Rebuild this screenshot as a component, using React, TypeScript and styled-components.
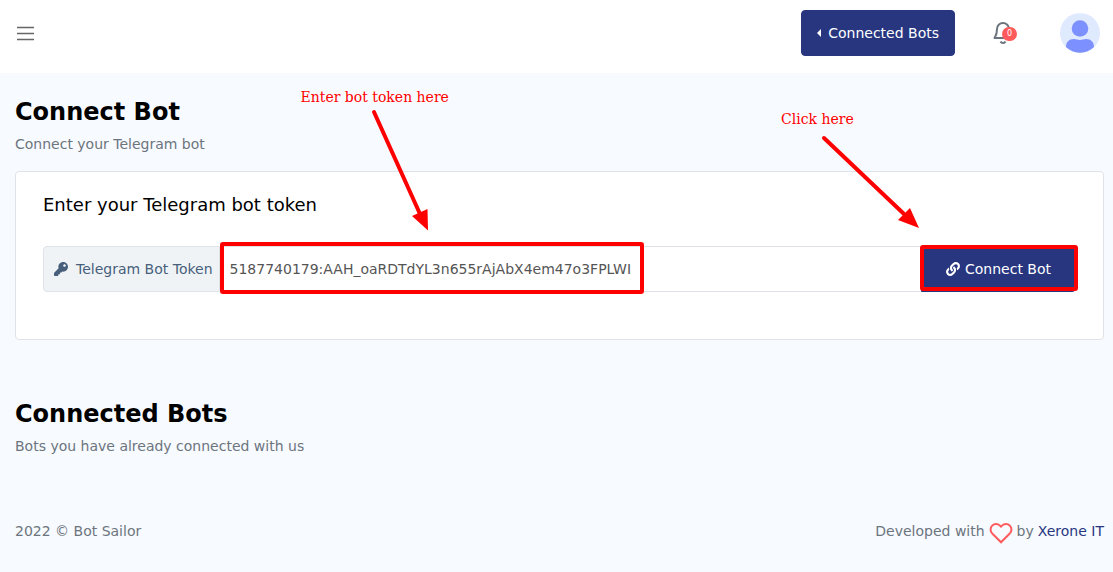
import React from "react";
import styled, { createGlobalStyle } from "styled-components";
import { FaKey, FaLink } from "react-icons/fa";
import { FiHeart } from "react-icons/fi";

const GlobalStyle = createGlobalStyle`
  * { box-sizing: border-box; }
  body {
    margin: 0;
    background: #f7faff;
    color: #6c757d;
    font-family: "DejaVu Sans", sans-serif;
    font-size: 14px;
    line-height: 20px;
  }
  button, input { font: inherit; }
`;

const TopBar = styled.header`
  display: flex;
  align-items: center;
  justify-content: space-between;
  padding: 10px 13px 17px 17px;
  background: #fff;
`;

const IconButton = styled.button`
  position: relative;
  display: flex;
  padding: 0;
  border: 0;
  background: none;
  color: #6c757d;
  cursor: pointer;
`;

const Actions = styled.div`
  display: flex;
  align-items: center;
`;

const PrimaryButton = styled.button<{ $joined?: boolean }>`
  display: flex;
  align-items: center;
  justify-content: center;
  gap: ${(p) => (p.$joined ? 5 : 7)}px;
  height: 46px;
  padding: 0 ${(p) => (p.$joined ? 24 : 15)}px;
  border: 1px solid #27367f;
  border-radius: ${(p) => (p.$joined ? "0 4px 4px 0" : "4px")};
  background: #27367f;
  color: #fff;
  white-space: nowrap;
  cursor: pointer;
`;

const BellButton = styled(IconButton)`
  margin: 0 45px 0 36px;
`;

const Badge = styled.span`
  position: absolute;
  top: 6px;
  left: 11px;
  width: 15px;
  border-radius: 7px;
  background: #ff5b5c;
  color: #fff;
  font-size: 8px;
  line-height: 14px;
  text-align: center;
`;

const Content = styled.main`
  padding: 24px 9px 0 15px;
`;

const Title = styled.h1`
  margin: 0;
  color: #000;
  font-size: 24px;
  line-height: 30px;
`;

const Subtitle = styled.p`
  margin: 7px 0 0;
`;

const Card = styled.section`
  margin: 17px 0 59px;
  padding: 21px 27px 47px;
  border: 1px solid #dfe3e7;
  border-radius: 4px;
  background: #fff;
`;

const CardTitle = styled.h2`
  margin: 0 0 29px;
  color: #000;
  font-size: 18px;
  font-weight: 400;
  line-height: 24px;
`;

const InputGroup = styled.form`
  display: flex;
  height: 46px;
`;

const Addon = styled.label`
  display: flex;
  align-items: center;
  gap: 8px;
  padding: 0 6px 0 10px;
  border: 1px solid #dfe3e7;
  border-radius: 4px 0 0 4px;
  background: #f0f3f6;
  color: #475f7b;
  white-space: nowrap;
`;

const Field = styled.div`
  position: relative;
  display: flex;
  flex: 1;
  min-width: 0;
`;

const TokenInput = styled.input`
  width: 100%;
  padding: 0 10px;
  border: solid #dfe3e7;
  border-width: 1px 0;
  outline: 0;
  background: #fff;
  color: #555;
`;

const Submit = styled.div`
  position: relative;
`;

const Highlight = styled.span<{ $target: "token" | "submit" }>`
  position: absolute;
  top: ${(p) => (p.$target === "token" ? -4 : -1)}px;
  left: ${(p) => (p.$target === "token" ? 0 : -1)}px;
  width: ${(p) => (p.$target === "token" ? "424px" : "calc(100% + 3px)")};
  height: ${(p) => (p.$target === "token" ? 52 : 46)}px;
  border: 4px solid #f00;
  border-radius: 3px;
  pointer-events: none;
`;

const Callout = styled.span<{ $target: "token" | "submit" }>`
  position: absolute;
  bottom: ${(p) => (p.$target === "token" ? 61 : 63)}px;
  left: ${(p) => (p.$target === "token" ? 81 : -140)}px;
  display: flex;
  flex-direction: column;
  gap: ${(p) => (p.$target === "token" ? 1 : 6)}px;
  color: #f00;
  font-family: "DejaVu Serif", serif;
  white-space: nowrap;
  pointer-events: none;

  svg {
    margin-left: ${(p) => (p.$target === "token" ? 70 : 40)}px;
  }
`;

const Footer = styled.footer`
  display: flex;
  align-items: center;
  justify-content: space-between;
  padding: 61px 9px 26px 15px;
`;

const Credit = styled.span`
  display: flex;
  align-items: center;
  gap: 4px;
`;

const Heart = styled(FiHeart)`
  box-sizing: content-box;
  padding-top: 4px;
  color: #ff5b5c;
  stroke-linejoin: miter;
`;

const FooterLink = styled.a`
  color: #27367f;
  text-decoration: none;
`;

export default function App() {
  return (
    <>
      <GlobalStyle />
      <TopBar>
        <IconButton aria-label="Toggle menu">
          <svg width="18" height="15" viewBox="0 0 18 15" stroke="#666" strokeWidth="1.4">
            <path d="M0 1.500h17M0 7.500h17M0 13.500h17" />
          </svg>
        </IconButton>
        <Actions>
          <PrimaryButton>
            <svg width="4" height="8" viewBox="0 0 4 8" fill="currentColor">
              <path d="M4 0v8L0 4z" />
            </svg>
            Connected Bots
          </PrimaryButton>
          <BellButton aria-label="Notifications">
            <svg width="24" height="24" viewBox="0 0 24 24" fill="none" stroke="currentColor" strokeWidth="2">
              <path d="M18 8a6 6 0 0 0-12 0c0 5.500-1.500 7-2.500 9h17c-1-2-2.500-3.500-2.500-9z" strokeLinejoin="round" />
              <path d="M14.500 20.500c-1 2-4 2-5 0" />
            </svg>
            <Badge>0</Badge>
          </BellButton>
          <IconButton aria-label="Account">
            <svg width="40" height="40" viewBox="0 0 40 40">
              <circle cx="20" cy="20" r="20" fill="#e0eaff" />
              <circle cx="20" cy="15.500" r="8.300" fill="#7c90ff" />
              <path d="M6 34C6 29 9 26 14 26c2 0 4 1 6 1s4-1 6-1c5 0 8 3 8 8a20 20 0 0 1-28 0z" fill="#7c90ff" />
            </svg>
          </IconButton>
        </Actions>
      </TopBar>
      <Content>
        <Title>Connect Bot</Title>
        <Subtitle>Connect your Telegram bot</Subtitle>
        <Card>
          <CardTitle>Enter your Telegram bot token</CardTitle>
          <InputGroup onSubmit={(e) => e.preventDefault()}>
            <Addon htmlFor="token">
              <FaKey size={14} />
              Telegram Bot Token
            </Addon>
            <Field>
              <TokenInput
                id="token"
                type="text"
                spellCheck={false}
                defaultValue="5187740179:AAH_oaRDTdYL3n655rAjAbX4em47o3FPLWI"
              />
              <Highlight $target="token" />
              <Callout $target="token">
                Enter bot token here
                <svg width="60" height="123" viewBox="0 0 60 123" fill="#f00">
                  <path d="M3 4L49 106" stroke="#f00" strokeWidth="4" strokeLinecap="round" />
                  <path d="M41 108L56.500 101 57 122.500z" />
                </svg>
              </Callout>
            </Field>
            <Submit>
              <PrimaryButton $joined type="submit">
                <FaLink size={14} />
                Connect Bot
              </PrimaryButton>
              <Highlight $target="submit" />
              <Callout $target="submit">
                Click here
                <svg width="100" height="94" viewBox="0 0 100 94" fill="#f00">
                  <path d="M3 3L83 79" stroke="#f00" strokeWidth="4" strokeLinecap="round" />
                  <path d="M77 85L89 73 98 93z" />
                </svg>
              </Callout>
            </Submit>
          </InputGroup>
        </Card>
        <Title as="h2">Connected Bots</Title>
        <Subtitle>Bots you have already connected with us</Subtitle>
      </Content>
      <Footer>
        <span>2022 © Bot Sailor</span>
        <Credit>
          Developed with
          <Heart size={24} />
          by <FooterLink href="#">Xerone IT</FooterLink>
        </Credit>
      </Footer>
    </>
  );
}
